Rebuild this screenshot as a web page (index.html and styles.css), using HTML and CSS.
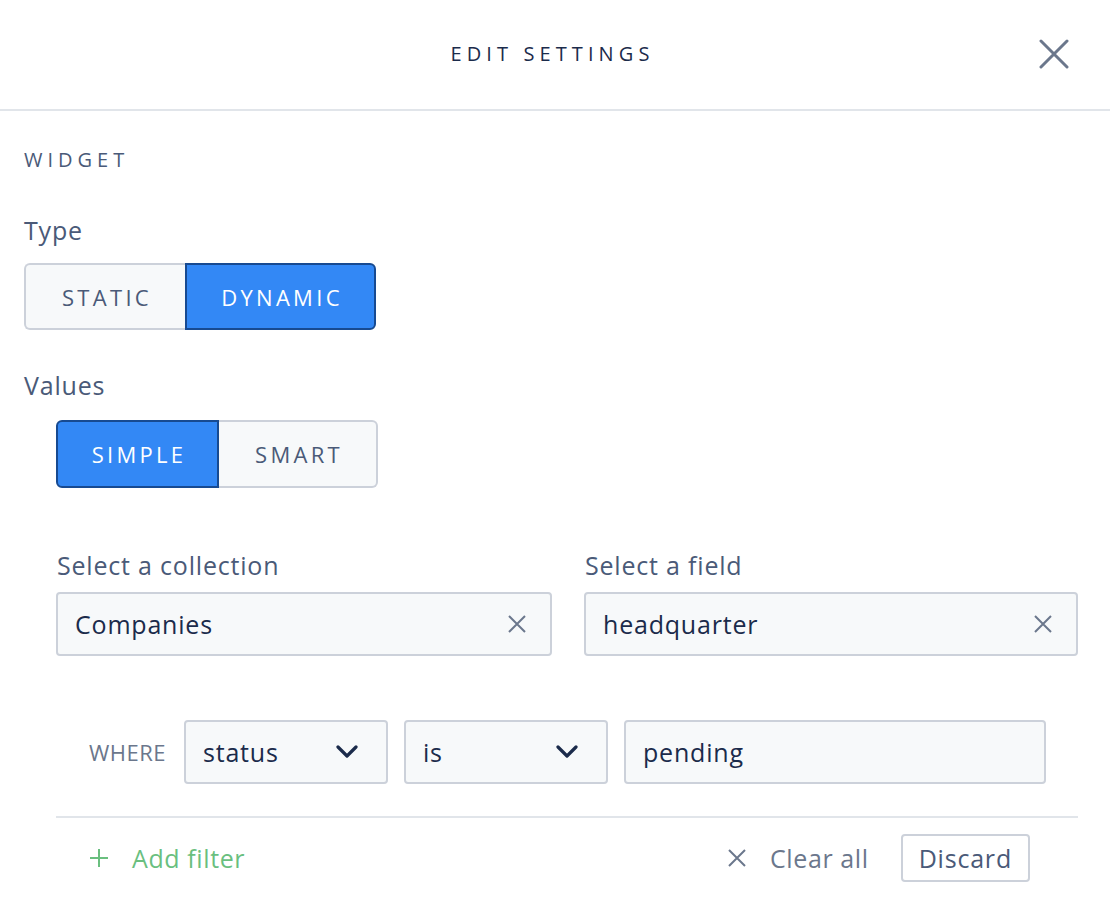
FILE: index.html
```html
<!DOCTYPE html>
<html>
<head>
<meta charset="utf-8">
<link rel="stylesheet" href="styles.css">
</head>
<body>
<div class="modal">
  <header class="header">
    <h1 class="title">EDIT SETTINGS</h1>
    <button class="close" aria-label="Close">
      <svg width="30" height="30" viewBox="0 0 30 30"><path d="M2 2 L28 28 M28 2 L2 28" stroke="#6b778c" stroke-width="3" stroke-linecap="round"/></svg>
    </button>
  </header>
  <main class="body">
    <div class="section-title">WIDGET</div>
    <div class="label type-label">Type</div>
    <div class="seg">
      <button class="seg-btn">STATIC</button>
      <button class="seg-btn active">DYNAMIC</button>
    </div>
    <div class="label values-label">Values</div>
    <div class="inner">
      <div class="seg">
        <button class="seg-btn active simple">SIMPLE</button>
        <button class="seg-btn smart">SMART</button>
      </div>
      <div class="fields">
        <div class="field">
          <div class="label">Select a collection</div>
          <div class="input">
            <span>Companies</span>
            <svg width="18" height="18" viewBox="0 0 18 18"><path d="M1 1 L17 17 M17 1 L1 17" stroke="#6b778c" stroke-width="2"/></svg>
          </div>
        </div>
        <div class="field">
          <div class="label">Select a field</div>
          <div class="input">
            <span>headquarter</span>
            <svg width="18" height="18" viewBox="0 0 18 18"><path d="M1 1 L17 17 M17 1 L1 17" stroke="#6b778c" stroke-width="2"/></svg>
          </div>
        </div>
      </div>
      <div class="where">
        <span class="where-label">WHERE</span>
        <div class="input select sel-status">
          <span>status</span>
          <svg width="22" height="14" viewBox="0 0 22 14"><path d="M2 2 L11 11 L20 2" fill="none" stroke="#1b2b4b" stroke-width="3.2" stroke-linecap="round" stroke-linejoin="round"/></svg>
        </div>
        <div class="input select sel-op">
          <span>is</span>
          <svg width="22" height="14" viewBox="0 0 22 14"><path d="M2 2 L11 11 L20 2" fill="none" stroke="#1b2b4b" stroke-width="3.2" stroke-linecap="round" stroke-linejoin="round"/></svg>
        </div>
        <div class="input value">
          <span>pending</span>
        </div>
      </div>
      <div class="footer">
        <button class="add">
          <svg width="18" height="18" viewBox="0 0 18 18"><path d="M9 0 V18 M0 9 H18" stroke="#6abf7f" stroke-width="2"/></svg>
          <span>Add filter</span>
        </button>
        <div class="actions">
          <button class="clear">
            <svg width="18" height="18" viewBox="0 0 18 18"><path d="M1 1 L17 17 M17 1 L1 17" stroke="#6b778c" stroke-width="2"/></svg>
            <span>Clear all</span>
          </button>
          <button class="discard">Discard</button>
        </div>
      </div>
    </div>
  </main>
</div>
</body>
</html>
```
FILE: styles.css
```css
* { box-sizing: border-box; }
html, body { margin: 0; padding: 0; background: #fff; }
body {
  font-family: "Open Sans", Lato, "Liberation Sans", sans-serif;
  color: #4a5a78;
  width: 1110px;
  height: 922px;
  overflow: hidden;
}
button { font-family: inherit; cursor: pointer; }

.header {
  height: 111px;
  border-bottom: 2px solid #e1e5ea;
  display: flex;
  align-items: center;
  justify-content: center;
  position: relative;
}
.title {
  margin: 0;
  font-size: 20px;
  font-weight: 400;
  letter-spacing: 5.1px;
  padding: 0 5px 2px 0;
  color: #1b2b4b;
}
.close {
  position: absolute;
  right: 41px;
  top: 39px;
  background: none;
  border: 0;
  padding: 0;
  width: 30px;
  height: 30px;
  display: flex;
}

.body { padding: 36px 32px 0 24px; }
.section-title {
  font-size: 20px;
  letter-spacing: 5px;
  line-height: 26px;
  color: #4a5a78;
}
.label {
  font-size: 25px;
  letter-spacing: 0.8px;
  line-height: 30px;
  color: #4a5a78;
}
.type-label { margin-top: 42px; }
.values-label { margin-top: 40px; }

.seg { display: flex; margin-top: 18px; }
.seg-btn {
  height: 67px;
  border: 2px solid #ccd1da;
  background: #f7f9fa;
  color: #4a5a78;
  font-size: 22px;
  letter-spacing: 3.3px;
  padding: 0 0 0 3px;
  margin: 0;
}
.seg-btn:first-child { border-radius: 6px 0 0 6px; border-right: 0; }
.seg-btn:last-child { border-radius: 0 6px 6px 0; border-left: 0; }
.seg-btn.active {
  background: #3388f5;
  border: 2px solid #174a91;
  color: #fff;
}
.seg-btn:first-child { width: 161px; }
.seg-btn:last-child { width: 191px; }

.inner { padding-left: 32px; }
.inner .seg { margin-top: 20px; }
.inner .seg-btn { height: 68px; }
.inner .seg-btn.simple { width: 163px; }
.inner .seg-btn.smart { width: 159px; }

.fields {
  display: flex;
  gap: 32px;
  margin-top: 62px;
}
.field .label { margin-left: 1px; }
.input {
  display: flex;
  align-items: center;
  justify-content: space-between;
  height: 64px;
  background: #f7f9fa;
  border: 2px solid #ccd1da;
  border-radius: 4px;
  padding: 0 24px 0 17px;
  font-size: 25px;
  letter-spacing: 0.8px;
  color: #1b2b4b;
  margin-top: 12px;
}
.field:first-child { width: 496px; flex: none; }
.field:last-child { width: 494px; flex: none; }

.where {
  display: flex;
  align-items: center;
  gap: 16px;
  margin-top: 64px;
  padding-left: 33px;
  padding-bottom: 32px;
  border-bottom: 2px solid #e1e5ea;
}
.where-label {
  font-size: 22px;
  letter-spacing: 0.5px;
  color: #6b778c;
  width: 79px;
}
.where .input { margin-top: 0; }
.select { padding: 0 28px 0 17px; }
.sel-status { width: 204px; }
.sel-op { width: 204px; }
.value { width: 422px; }

.footer {
  display: flex;
  align-items: center;
  justify-content: space-between;
  padding: 16px 48px 0 34px;
}
.add, .clear {
  display: flex;
  align-items: center;
  gap: 24px;
  background: none;
  border: 0;
  padding: 0;
  font-size: 25px;
  letter-spacing: 0.6px;
}
.add { color: #6abf7f; }
.clear { color: #6b778c; }
.actions { display: flex; align-items: center; gap: 32px; }
.discard {
  height: 48px;
  padding: 0 16px;
  border: 2px solid #ccd1da;
  border-radius: 4px;
  background: #fff;
  color: #4a5a78;
  font-size: 25px;
  letter-spacing: 0.8px;
}
```
